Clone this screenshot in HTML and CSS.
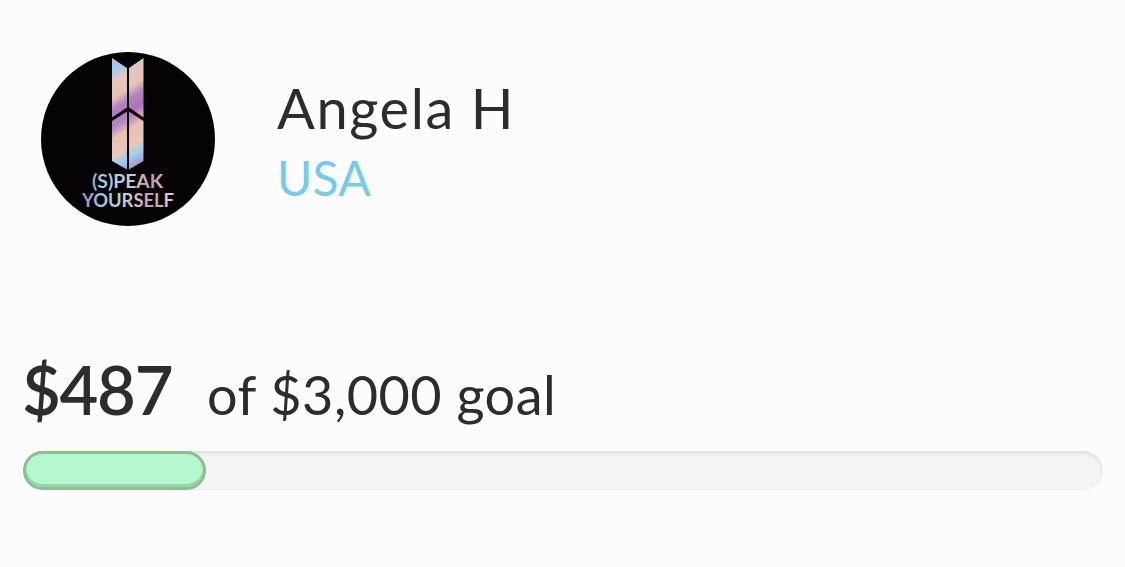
FILE: index.html
```
<!DOCTYPE html>
<html lang="en">
<head>
    <meta charset="UTF-8">
    <meta name="viewport" content="width=device-width, initial-scale=1.0">
    <title>Angela H</title>
    <link rel="stylesheet" href="styles.css">
</head>
<body>
    <div class="container">
        <header class="profile">
            <svg class="avatar" viewBox="0 0 174 174">
                <defs>
                    <linearGradient id="foilTop" gradientUnits="userSpaceOnUse" x1="69" y1="10" x2="104" y2="64">
                        <stop offset="0" stop-color="#c5b4e2"/>
                        <stop offset="0.14" stop-color="#9fcdf0"/>
                        <stop offset="0.28" stop-color="#e6c6be"/>
                        <stop offset="0.5" stop-color="#e6c4b4"/>
                        <stop offset="0.64" stop-color="#b583c2"/>
                        <stop offset="0.82" stop-color="#a673bb"/>
                        <stop offset="0.96" stop-color="#d8a9bd"/>
                    </linearGradient>
                    <linearGradient id="foilBottom" gradientUnits="userSpaceOnUse" x1="70" y1="62" x2="102" y2="116">
                        <stop offset="0" stop-color="#a878bd"/>
                        <stop offset="0.2" stop-color="#b486c3"/>
                        <stop offset="0.36" stop-color="#e8c2b4"/>
                        <stop offset="0.6" stop-color="#e8c8b8"/>
                        <stop offset="0.74" stop-color="#9bd0f2"/>
                        <stop offset="0.92" stop-color="#ad91d2"/>
                    </linearGradient>
                    <linearGradient id="foilText" gradientUnits="userSpaceOnUse" x1="41" y1="0" x2="133" y2="0">
                        <stop offset="0" stop-color="#a58bb5"/>
                        <stop offset="0.22" stop-color="#a6c5df"/>
                        <stop offset="0.42" stop-color="#b9cbe0"/>
                        <stop offset="0.58" stop-color="#e0bfb9"/>
                        <stop offset="0.75" stop-color="#bf96b8"/>
                        <stop offset="1" stop-color="#ead3c8"/>
                    </linearGradient>
                </defs>
                <circle cx="87" cy="87" r="87" fill="#050304"/>
                <path fill="url(#foilTop)" d="M71 6l15 10v39.500L71 65.500zM102.500 6L88 16v39.500l14.500 10z"/>
                <path fill="url(#foilBottom)" d="M71 69l15-9.500v58L71 109zM88 59.500l14.500 9.500v40L88 117.500z"/>
                <text class="avatar-text" x="51" y="136" textLength="71" lengthAdjust="spacingAndGlyphs">(S)PEAK</text>
                <text class="avatar-text" x="41" y="155" textLength="92" lengthAdjust="spacingAndGlyphs">YOURSELF</text>
            </svg>
            <div class="info">
                <div class="name">Angela H</div>
                <div class="country">USA</div>
            </div>
        </header>
        <main>
            <div class="amounts">
                <span class="raised">$487</span>
                <span class="goal">of $3,000 goal</span>
            </div>
            <div class="progress">
                <div class="progress-fill" style="width: 16.94%"></div>
            </div>
        </main>
    </div>
</body>
</html>
```
FILE: styles.css
```
body {
    font-family: Lato, 'Liberation Sans', sans-serif;
    margin: 0;
    background-color: #fcfcfc;
    color: #2c2c2e;
}
.container {
    padding: 52px 22px 0 23px;
}
.profile {
    display: flex;
    align-items: flex-start;
    height: 174px;
    padding-left: 18px;
}
.avatar {
    display: block;
    width: 174px;
    height: 174px;
    flex: none;
}
.avatar-text {
    font-size: 19px;
    font-weight: 700;
    fill: url(#foilText);
}
.info {
    margin: 23px 0 0 62px;
    white-space: nowrap;
}
.name {
    font-size: 56px;
    line-height: 66px;
    letter-spacing: 1.6px;
}
.country {
    font-size: 48px;
    line-height: 73px;
    letter-spacing: 0.3px;
    color: #74cbea;
}
.amounts {
    display: flex;
    align-items: baseline;
    height: 80px;
    margin-top: 123px;
    line-height: 80px;
    white-space: nowrap;
}
.raised {
    width: 150px;
    margin-left: -1px;
    font-size: 67px;
    font-weight: 600;
    letter-spacing: -1.3px;
}
.goal {
    margin-left: 35px;
    font-size: 54px;
    letter-spacing: 0.5px;
}
.progress {
    height: 39px;
    margin-top: 22px;
    border-radius: 20px;
    background: #f4f4f4;
    box-shadow: inset 0 2px 5px rgba(0, 0, 0, 0.1);
}
.progress-fill {
    box-sizing: border-box;
    height: 39px;
    border: 3px solid #8abf90;
    border-radius: 20px;
    background: #b5f8cf;
    box-shadow: inset 0 -3px 0 #95d3ac;
}
```
